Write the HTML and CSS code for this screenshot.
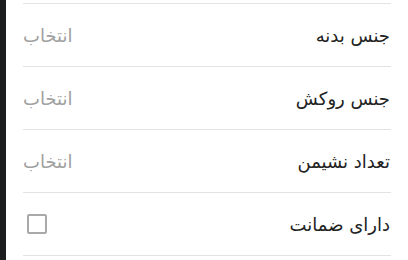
FILE: index.html
```html
<!DOCTYPE html>
<html lang="fa" dir="rtl">
<head>
  <meta charset="utf-8">
  <title>فیلترها</title>
  <link rel="stylesheet" href="styles.css">
</head>
<body>
  <main class="screen">
    <ul class="fields">
      <li class="field">
        <span class="label">جنس بدنه</span>
        <span class="value">انتخاب</span>
      </li>
      <li class="field">
        <span class="label">جنس روکش</span>
        <span class="value">انتخاب</span>
      </li>
      <li class="field">
        <span class="label">تعداد نشیمن</span>
        <span class="value">انتخاب</span>
      </li>
      <li class="field">
        <span class="label">دارای ضمانت</span>
        <span class="checkbox"></span>
      </li>
    </ul>
  </main>
  <div class="edge"></div>
</body>
</html>
```

FILE: styles.css
```css
* {
  box-sizing: border-box;
}

html, body {
  height: 100%;
}

body {
  margin: 0;
  display: flex;
  background: #fff;
  font-family: "DejaVu Sans", sans-serif;
}

.edge {
  width: 6px;
  background: #1c1d1f;
}

.screen {
  flex-grow: 1;
  padding: 3px 17px 0 17px;
}

.fields {
  list-style: none;
  margin: 0;
  padding: 0;
  border-top: 1px solid #e3e3e3;
}

.field {
  height: 63px;
  display: flex;
  align-items: center;
  justify-content: space-between;
  border-bottom: 1px solid #e3e3e3;
  padding: 0 1px 0 0;
}

.label {
  font-size: 18px;
  color: #222;
}

.value {
  font-size: 18px;
  color: #a0a0a0;
}

.checkbox {
  width: 20px;
  height: 20px;
  margin-left: 4px;
  border: 2px solid #a9a9a9;
  border-radius: 2px;
}
```
